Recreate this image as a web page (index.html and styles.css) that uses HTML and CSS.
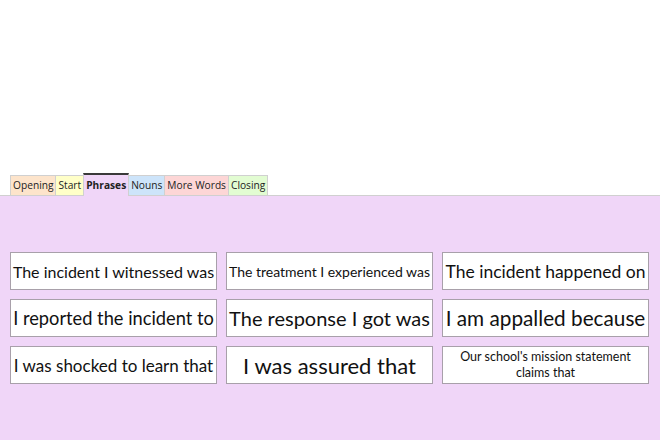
FILE: index.html
```html
<!DOCTYPE html>
<html lang="en">
<head>
<meta charset="utf-8">
<link rel="stylesheet" href="styles.css">
</head>
<body>
<div class="top"></div>
<div class="tabs">
  <div class="tab t-opening">Opening</div>
  <div class="tab t-start">Start</div>
  <div class="tab t-phrases active">Phrases</div>
  <div class="tab t-nouns">Nouns</div>
  <div class="tab t-more">More Words</div>
  <div class="tab t-closing">Closing</div>
</div>
<div class="panel">
  <div class="grid">
    <div class="card fit"><span>The incident I witnessed was</span></div>
    <div class="card fit"><span>The treatment I experienced was</span></div>
    <div class="card fit"><span>The incident happened on</span></div>
    <div class="card fit"><span>I reported the incident to</span></div>
    <div class="card fit"><span>The response I got was</span></div>
    <div class="card fit"><span>I am appalled because</span></div>
    <div class="card fit"><span>I was shocked to learn that</span></div>
    <div class="card fit"><span>I was assured that</span></div>
    <div class="card wrap"><span>Our school's mission statement claims that</span></div>
  </div>
</div>
<script src="fit.js"></script>
</body>
</html>
```

FILE: styles.css
```css
html, body {
  margin: 0;
  padding: 0;
  background: #ffffff;
  height: 100%;
  overflow: hidden;
}
body {
  display: flex;
  flex-direction: column;
  font-family: "Lato", "Open Sans", sans-serif;
}
.top {
  height: 173px;
  flex: none;
}
.tabs {
  display: flex;
  align-items: flex-end;
  padding-left: 10px;
  height: 22px;
  flex: none;
  position: relative;
  z-index: 1;
}
.tab {
  font-family: "Open Sans", "Noto Sans", sans-serif;
  font-size: 10.2px;
  color: #222;
  line-height: 19px;
  padding: 0 2px;
  border: 1px solid #d0d0d0;
  border-bottom: none;
  box-sizing: border-box;
  height: 20px;
  margin-right: -1px;
}
.tab.active {
  line-height: 20px;
  border-top: 2px solid #3a3a3a;
  font-weight: 700;
  margin-bottom: -1px;
  height: 23px;
}
.t-opening { background: #fde4cb; }
.t-start { background: #ffffc8; }
.t-phrases { background: #f0d6f8; }
.t-nouns { background: #cde4fa; }
.t-more { background: #fdd6d6; }
.t-closing { background: #e2fcd2; }
.panel {
  flex: 1;
  background: #f0d6f8;
  border-top: 1px solid #d0d0d0;
  padding: 56px 12px 0 10px;
}
.grid {
  display: grid;
  grid-template-columns: repeat(3, 207px);
  grid-auto-rows: 38px;
  column-gap: 9px;
  row-gap: 9px;
}
.card {
  background: #ffffff;
  border: 1px solid #a8a0aa;
  box-sizing: border-box;
  display: flex;
  align-items: center;
  justify-content: center;
  overflow: hidden;
  color: #111;
  text-align: center;
}
.card.fit span {
  white-space: nowrap;
  font-size: 22px;
}
.card.wrap span {
  font-size: 12.5px;
  line-height: 16px;
  padding: 0 10px;
}
```

FILE: fit.js
```js
document.querySelectorAll('.card.fit').forEach(function (card) {
  var span = card.querySelector('span');
  var max = card.clientWidth - 4;
  var size = 22;
  span.style.fontSize = size + 'px';
  while (span.offsetWidth > max && size > 6) {
    size -= 0.25;
    span.style.fontSize = size + 'px';
  }
});
```
